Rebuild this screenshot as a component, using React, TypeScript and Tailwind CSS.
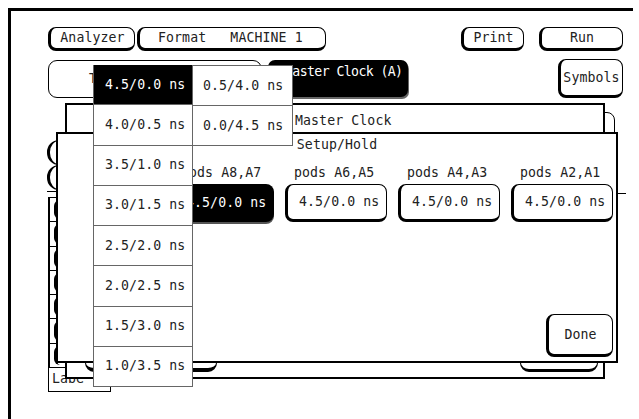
import React from 'react';

const mono = "font-['DejaVu_Sans_Mono',monospace] text-[13.2px] leading-[14px] tracking-[0.1px]";

const leftOptions = ['4.5/0.0 ns', '4.0/0.5 ns', '3.5/1.0 ns', '3.0/1.5 ns', '2.5/2.0 ns', '2.0/2.5 ns', '1.5/3.0 ns', '1.0/3.5 ns'];
const rightOptions = ['0.5/4.0 ns', '0.0/4.5 ns'];
const pods = ['A8,A7', 'A6,A5', 'A4,A3', 'A2,A1'];

function Key({ className = '', children }: { className?: string; children?: React.ReactNode }) {
  return (
    <div className={`flex items-center rounded-[8px] border border-black border-b-[3px] border-l-[3px] bg-white text-[#222] ${className}`}>
      {children}
    </div>
  );
}

function App() {
  return (
    <div className={`relative h-[419px] w-[639px] overflow-hidden bg-white text-[#222] ${mono}`}>
      {/* base screen */}
      <div className="ml-[8px] mt-[8px] flex h-[411px] w-[625px] flex-col border-l-[3px] border-t-[3px] border-black">
        <div className="flex items-start justify-between pl-[37px] pr-[10px] pt-[16px]">
          <div className="flex gap-[2px]">
            <Key className="h-[24px] w-[87px] justify-center">Analyzer</Key>
            <Key className="h-[24px] w-[189px] justify-start whitespace-pre pl-[18px]">Format   MACHINE 1</Key>
          </div>
          <div className="flex gap-[15px]">
            <Key className="h-[24px] w-[63px] justify-center">Print</Key>
            <Key className="h-[24px] w-[84px] justify-center">Run</Key>
          </div>
        </div>

        <div className="mt-[8px] flex items-start pl-[37px] pr-[10px]">
          <div className="mt-[1px] flex h-[38px] w-[214px] items-center rounded-[9px] border border-black pl-[40px]">Timing</div>
          <div className="ml-[6px] mt-[1px] h-[37px] w-[140px] rounded-[7px] bg-black pl-[17px] pt-[5px] tracking-[-0.6px] text-white shadow-[1px_2px_0_#666]">
            Master Clock (A)
          </div>
          <Key className="ml-auto h-[39px] w-[65px] justify-center">Symbols</Key>
        </div>

        <div className="flex flex-1 justify-between pl-[36px] pr-[7px]">
          <div className="flex flex-col items-start">
            <div className="mt-[42px] h-[25px] w-[150px] rounded-l-[12px] border border-l-[3px] border-black" />
            <div className="h-[25px] w-[150px] rounded-l-[12px] border border-l-[3px] border-black" />
            <div className="mt-[1px] h-[1px] w-[20px] bg-black" />
            <div className="ml-[1px] mt-[5px] flex w-[140px] flex-col border-l-2 border-black">
              {[0, 1, 2, 3, 4, 5, 6].map((i) => (
                <div key={i} className="flex h-[24.3px] items-stretch border-t border-black py-[2px] pl-[4px]">
                  <div className="w-[100px] rounded-l-[6px] border-l-[3px] border-black" />
                </div>
              ))}
            </div>
            <div className="ml-[1px] flex h-[25px] w-[63px] items-end overflow-hidden border border-black pb-[5px] pl-[3px]">
              <span className="w-[33px] overflow-hidden whitespace-nowrap">Labels</span>
            </div>
          </div>
          <div className="flex flex-col items-end">
            <div className="mr-[11px] mt-[14px] h-[40px] w-[60px] rounded-[8px] border border-black" />
            <div className="mt-[41px] h-[1px] w-[9px] bg-black" />
          </div>
        </div>
      </div>

      {/* Master Clock dialog */}
      <div className="absolute left-[65px] top-[103px] flex h-[276px] w-[540px] flex-col border-2 border-black bg-white">
        <div className="pl-[228px] pt-[9px]">Master Clock</div>
        <div className="mt-auto flex items-end justify-between pb-[5px] pl-[18px] pr-[5px]">
          <div className="h-[34px] w-[132px] rounded-[9px] border border-b-[4px] border-black bg-white" />
          <div className="h-[40px] w-[78px] rounded-[9px] border border-b-[3px] border-black bg-white" />
        </div>
      </div>

      {/* Setup/Hold dialog */}
      <div className="absolute left-[56px] top-[132px] flex h-[231px] w-[562px] flex-col border-2 border-black bg-white">
        <div className="pt-[4px] text-center">Setup/Hold</div>
        <div className="mt-[14px] flex gap-[11px] pl-[114px]">
          {pods.map((p, i) => (
            <div key={p} className="flex w-[102px] flex-col">
              <div className="pl-[9px]">pods {p}</div>
              {i === 0 ? (
                <div className="mt-[4px] flex h-[38px] items-center rounded-[8px] bg-black pl-[14px] text-white shadow-[0_2px_0_#555]">4.5/0.0 ns</div>
              ) : (
                <Key className="mt-[4px] h-[38px] justify-start pl-[11px]">4.5/0.0 ns</Key>
              )}
            </div>
          ))}
        </div>
        <Key className="mb-[4px] mr-[3px] mt-auto h-[43px] w-[67px] self-end justify-center">Done</Key>
      </div>

      {/* option popup */}
      <div className="absolute left-[93px] top-[65px] flex items-start">
        <div className="flex w-[100px] flex-col border-x border-[#666] bg-white">
          {leftOptions.map((o, i) => (
            <div
              key={o}
              className={
                i === 0
                  ? 'flex h-[40.25px] items-center border-b border-[#666] bg-black pl-[11px] text-white'
                  : 'flex h-[40.25px] items-center border-b border-[#666] pl-[11px] text-[#222]'
              }
            >
              {o}
            </div>
          ))}
        </div>
        <div className="flex w-[100px] flex-col border-r border-t border-[#666] bg-white">
          {rightOptions.map((o) => (
            <div key={o} className="flex h-[40px] items-center border-b border-[#666] pl-[10px] text-[#222]">
              {o}
            </div>
          ))}
        </div>
      </div>
    </div>
  );
}

export default App;
